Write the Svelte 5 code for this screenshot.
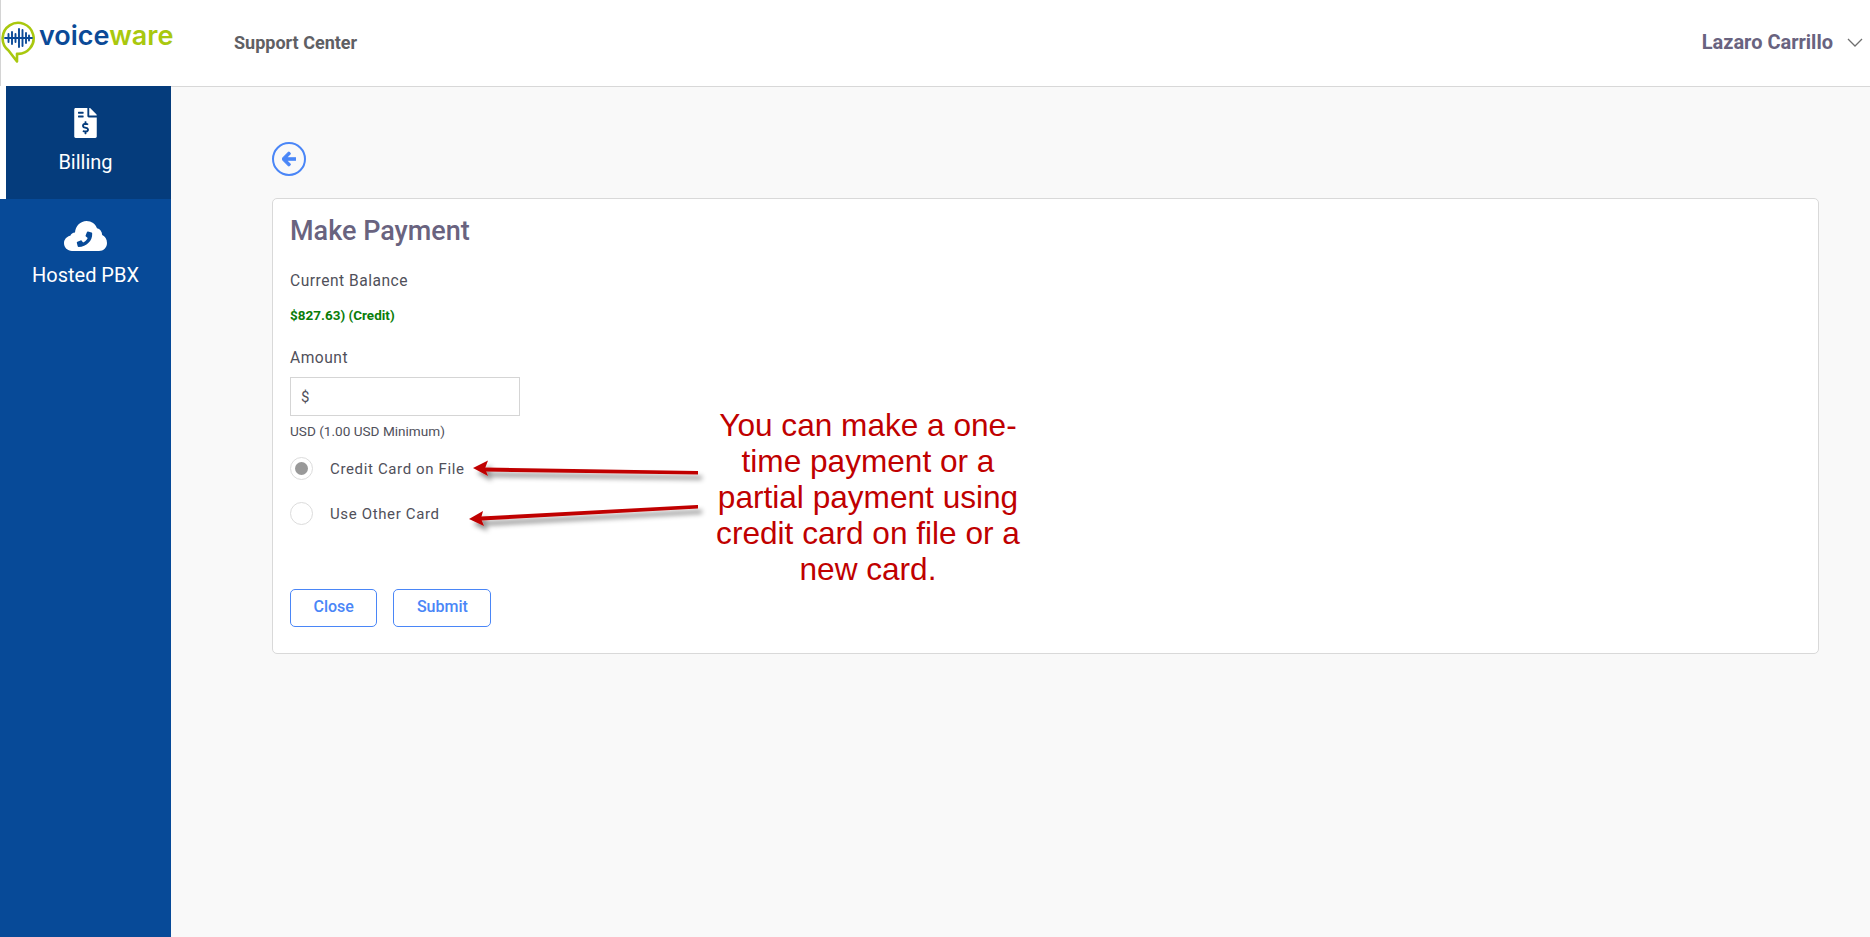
<script>
  let amount = $state('');
  let method = $state('file');

  const navItems = [
    { id: 'billing', label: 'Billing', active: true },
    { id: 'pbx', label: 'Hosted PBX', active: false },
  ];
</script>

<div class="page">
  <header class="topbar">
    <div class="logo">
      <svg class="logo-mark" width="36" height="52" viewBox="0 0 36 52">
        <path d="M7.500 31.500 A15.500 15.500 0 1 1 16 34.800 L16 42.500 Z" fill="none" stroke="#a9c80e" stroke-width="2.600" stroke-linejoin="round"/>
        <g stroke="#0b4a97" stroke-width="1.900" stroke-linecap="round">
          <path d="M4 19h27"/>
          <path d="M7.500 15v8M11 13v12M14.500 15v8M18 10v18M21.500 11v16M25 14v10M28 16.500v5"/>
        </g>
      </svg>
      <span class="logo-text"><span class="voice">voice</span><span class="ware">ware</span></span>
    </div>
    <span class="center-name">Support Center</span>
    <div class="user">
      <span>Lazaro Carrillo</span>
      <svg width="16" height="9" viewBox="0 0 16 9"><path d="M1 1l7 7 7-7" fill="none" stroke="#6f6f6f" stroke-width="1.300"/></svg>
    </div>
  </header>

  <div class="body">
    <nav class="sidebar">
      {#each navItems as item}
        <a class="nav-item" class:active={item.active} href="#{item.id}">
          {#if item.id === 'billing'}
            <svg width="23" height="30" viewBox="0 0 384 512"><path fill="#fff" d="M377 105L279.1 7c-4.5-4.5-10.6-7-17-7H256v128h128v-6.1c0-6.3-2.5-12.4-7-16.9zm-153 31V0H24C10.7 0 0 10.7 0 24v464c0 13.3 10.7 24 24 24h336c13.3 0 24-10.7 24-24V160H248c-13.2 0-24-10.8-24-24zM64 72c0-4.42 3.58-8 8-8h80c4.42 0 8 3.58 8 8v16c0 4.42-3.58 8-8 8H72c-4.42 0-8-3.58-8-8V72zm0 80v-16c0-4.42 3.58-8 8-8h80c4.42 0 8 3.58 8 8v16c0 4.42-3.58 8-8 8H72c-4.42 0-8-3.58-8-8zm144 263.88V440c0 4.42-3.58 8-8 8h-16c-4.42 0-8-3.58-8-8v-24.29c-11.29-.58-22.27-4.52-31.37-11.35-3.9-2.93-4.1-8.77-.57-12.14l11.75-11.21c2.77-2.64 6.89-2.76 10.13-.73 3.87 2.42 8.26 3.72 12.82 3.72h28.11c6.5 0 11.8-5.92 11.8-13.19 0-5.95-3.61-11.19-8.77-12.73l-45-13.5c-18.59-5.58-31.58-23.42-31.58-43.39 0-24.52 19.05-44.44 42.67-45.07V232c0-4.42 3.58-8 8-8h16c4.42 0 8 3.58 8 8v24.29c11.29.58 22.27 4.51 31.37 11.35 3.9 2.93 4.1 8.77.57 12.14l-11.75 11.21c-2.77 2.64-6.89 2.76-10.13.73-3.87-2.43-8.26-3.72-12.82-3.72h-28.11c-6.5 0-11.8 5.92-11.8 13.19 0 5.95 3.61 11.19 8.77 12.73l45 13.5c18.59 5.58 31.58 23.42 31.58 43.39 0 24.53-19.05 44.44-42.67 45.07z"/></svg>
          {:else}
            <svg width="43" height="30" viewBox="0 0 43 30">
              <path fill="#fff" d="M8 30C3.500 30 0 26.500 0 22.300C0 18.500 2.700 15.500 6.300 14.800C7 12.800 8.800 11.500 11 11.500C11.400 5 16.500 0 22.500 0C27.500 0 31.500 3 33 7.300C36 8 38 10.500 38.200 14C41 15.300 43 18.300 43 22C43 26.500 39.500 30 35 30Z"/>
              <path fill="#074a98" d="M27.500 11.500l-3.500-.9c-.5-.1-.9.100-1.100.6l-1.300 3.200c-.2.400 0 .9.300 1.100l1.800 1.400c-1 2-2.600 3.600-4.600 4.600l-1.400-1.800c-.3-.3-.7-.5-1.100-.3l-3.200 1.300c-.5.200-.7.600-.6 1.100l.9 3.500c.1.400.5.700.9.700C22.700 25.500 28.500 19.700 28.200 12.400c0-.4-.3-.8-.7-.9z"/>
            </svg>
          {/if}
          <span>{item.label}</span>
        </a>
      {/each}
    </nav>

    <main class="content">
      <button class="back" aria-label="Back">
        <svg width="14" height="16" viewBox="0 0 448 512"><path fill="#4a86f7" stroke="#4a86f7" stroke-width="36" d="M257.500 445.100l-22.200 22.200c-9.400 9.400-24.600 9.400-33.900 0L7 273c-9.400-9.400-9.400-24.600 0-33.900L201.400 44.700c9.400-9.400 24.600-9.400 33.900 0l22.200 22.200c9.500 9.500 9.300 25-.4 34.300L136.600 216H424c13.300 0 24 10.700 24 24v32c0 13.300-10.700 24-24 24H136.600l120.500 114.800c9.800 9.300 10 24.800.4 34.300z"/></svg>
      </button>

      <section class="card">
        <h1>Make Payment</h1>
        <p class="field-label">Current Balance</p>
        <p class="balance">$827.63) (Credit)</p>
        <label class="field-label amount-label" for="amount">Amount</label>
        <div class="amount-box">
          <span>$</span>
          <input id="amount" bind:value={amount} />
        </div>
        <p class="hint">USD (1.00 USD Minimum)</p>

        <div class="radios">
          <label class="radio">
            <input type="radio" bind:group={method} value="file" />
            <span class="dot"></span>
            Credit Card on File
          </label>
          <label class="radio">
            <input type="radio" bind:group={method} value="other" />
            <span class="dot"></span>
            Use Other Card
          </label>
        </div>

        <div class="actions">
          <button class="btn">Close</button>
          <button class="btn">Submit</button>
        </div>
      </section>
    </main>
  </div>

  <!-- annotation pasted over the screenshot -->
  <div class="note">You can make a one-time payment or a partial payment using credit card on file or a new card.</div>
  <svg class="arrows" width="1870" height="937" viewBox="0 0 1870 937">
    <defs>
      <filter id="shade" x="-10%" y="-100%" width="120%" height="400%">
        <feDropShadow dx="4" dy="5" stdDeviation="2.500" flood-color="#000" flood-opacity="0.45"/>
      </filter>
    </defs>
    <g filter="url(#shade)">
      <path d="M697 472L486 468.500V470.500L697 473.500Z" fill="#c00000" stroke="#c00000" stroke-width="2"/>
      <path d="M473 468L488 460.500L485 468.500L488 476Z" fill="#c00000"/>
    </g>
    <g filter="url(#shade)">
      <path d="M697 506L482 517.500V519.500L697 507.500Z" fill="#c00000" stroke="#c00000" stroke-width="2"/>
      <path d="M469 519L483 511L481 518.500L484 526Z" fill="#c00000"/>
    </g>
  </svg>
</div>

<style>
  :global(body) {
    margin: 0;
    background: #f9f9f9;
    font-family: Roboto, "Liberation Sans", sans-serif;
  }

  .page {
    position: relative;
    width: 1870px;
    height: 937px;
    overflow: hidden;
    display: flex;
    flex-direction: column;
  }

  .topbar {
    height: 87px;
    flex: none;
    box-sizing: border-box;
    background: #fff;
    border-bottom: 1px solid #d8d8d8;
    padding-bottom: 2px;
    display: flex;
    align-items: center;
    box-shadow: inset 1px 0 0 #d4d4d4;
  }

  .logo {
    width: 234px;
    flex: none;
    display: flex;
    align-items: flex-start;
    height: 84px;
  }

  .logo-mark {
    margin-top: 19px;
    flex: none;
    margin-left: 1px;
    margin-right: 2px;
  }

  .logo-text {
    font-family: Inter, sans-serif;
    font-weight: 600;
    font-size: 27px;
    line-height: 30px;
    margin-top: 21px;
  }

  .voice { color: #0b4a97; }
  .ware { color: #a9c80e; }

  .center-name {
    font-size: 18px;
    font-weight: 700;
    color: #5f6064;
  }

  .user {
    margin-left: auto;
    display: flex;
    align-items: center;
    gap: 14px;
    padding-right: 7px;
    font-size: 20px;
    font-weight: 700;
    color: #69637f;
  }

  .body {
    flex: 1;
    display: flex;
    min-height: 0;
    margin-top: -1px;
  }

  .sidebar {
    width: 171px;
    flex: none;
    background: #074a98;
    display: flex;
    flex-direction: column;
  }

  .nav-item {
    height: 113px;
    box-sizing: border-box;
    padding-top: 22px;
    display: flex;
    flex-direction: column;
    align-items: center;
    gap: 13px;
    color: #fff;
    font-size: 20px;
    line-height: 22px;
    text-decoration: none;
    position: relative;
  }

  .nav-item.active {
    background: #053c7c;
  }

  .nav-item.active::before {
    content: '';
    position: absolute;
    left: 0;
    top: 0;
    bottom: 0;
    width: 6px;
    background: #fff;
  }

  .content {
    flex: 1;
    padding: 56px 51px 0 101px;
  }

  .back {
    width: 34px;
    height: 34px;
    padding: 0;
    box-sizing: border-box;
    border: 2px solid #4a86f7;
    border-radius: 50%;
    background: transparent;
    display: flex;
    align-items: center;
    justify-content: center;
    margin: 0;
  }

  .card {
    margin-top: 22px;
    height: 456px;
    box-sizing: border-box;
    background: #fff;
    border: 1px solid #d9d9d9;
    border-radius: 5px;
    padding: 16px 17px;
  }

  h1 {
    margin: 0 0 24px;
    font-size: 27px;
    line-height: 32px;
    font-weight: 500;
    color: #69637f;
  }

  .field-label {
    display: block;
    margin: 0;
    font-size: 15.600px;
    line-height: 20px;
    letter-spacing: 0.5px;
    color: #50505a;
  }

  .balance {
    margin: 14px 0 0;
    font-size: 13.500px;
    line-height: 20px;
    font-weight: 700;
    color: #0a7d0a;
  }

  .amount-label {
    margin-top: 23px;
  }

  .amount-box {
    margin-top: 9px;
    width: 230px;
    height: 39px;
    box-sizing: border-box;
    border: 1px solid #d5d5d5;
    background: #fff;
    display: flex;
    align-items: center;
    padding-left: 10px;
    font-size: 15px;
    color: #50505a;
  }

  .amount-box input {
    border: 0;
    outline: 0;
    min-width: 0;
    flex: 1;
    background: transparent;
  }

  .hint {
    margin: 6px 0 0;
    font-size: 13.600px;
    line-height: 18px;
    color: #50505a;
  }

  .radios {
    margin-top: 17px;
    display: flex;
    flex-direction: column;
    gap: 22px;
  }

  .radio {
    display: flex;
    align-items: center;
    gap: 17px;
    height: 23px;
    font-size: 15px;
    letter-spacing: 0.64px;
    color: #50505a;
  }

  .radio input {
    position: absolute;
    opacity: 0;
    width: 0;
    height: 0;
  }

  .dot {
    width: 23px;
    height: 23px;
    box-sizing: border-box;
    border: 1px solid #dcdcdc;
    border-radius: 50%;
    background: #fff;
    display: flex;
    align-items: center;
    justify-content: center;
    flex: none;
  }

  .radio input:checked + .dot::after {
    content: '';
    width: 13px;
    height: 13px;
    border-radius: 50%;
    background: #999;
  }

  .actions {
    margin-top: 64px;
    display: flex;
    gap: 16px;
  }

  .btn {
    height: 38px;
    padding: 0 22.500px 3px;
    border: 1px solid #4a86f7;
    border-radius: 5px;
    background: #fff;
    color: #4a86f7;
    font-family: inherit;
    font-size: 16px;
    font-weight: 500;
  }

  .note {
    position: absolute;
    left: 710px;
    top: 407px;
    width: 316px;
    text-align: center;
    font-family: "Liberation Sans", sans-serif;
    font-size: 31.600px;
    line-height: 36px;
    color: #c00000;
  }

  .arrows {
    position: absolute;
    left: 0;
    top: 0;
    pointer-events: none;
  }
</style>
